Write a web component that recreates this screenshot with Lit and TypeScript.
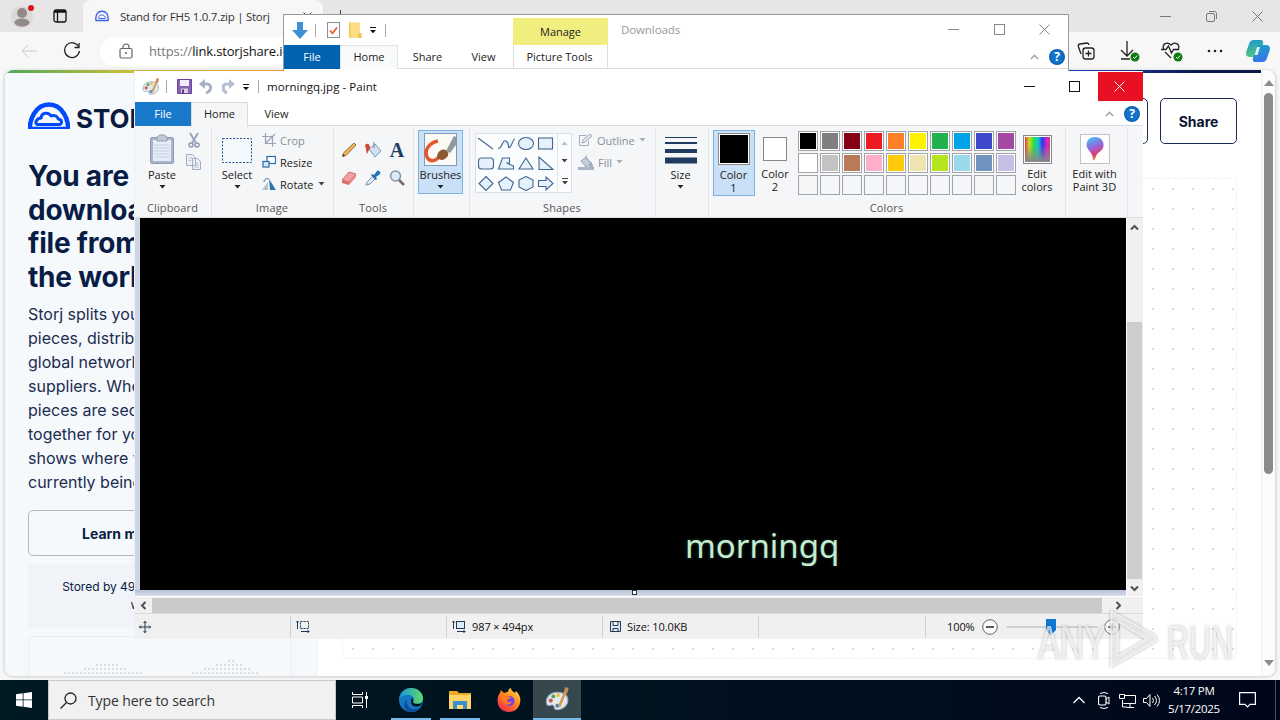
import { LitElement, html, css, svg, nothing } from 'lit';
import type { SVGTemplateResult } from 'lit';
import { customElement } from 'lit/decorators.js';
import { classMap } from 'lit/directives/class-map.js';
import { styleMap } from 'lit/directives/style-map.js';

const icon = (w: number, h: number, body: SVGTemplateResult) =>
    html`<svg width=${w} height=${h} viewBox="0 0 ${w} ${h}" fill="none">${body}</svg>`;

const shared = css`
    :host {
        box-sizing: border-box;
        display: block;
        font-family: 'Open Sans', 'Noto Sans', sans-serif;
        font-size: 11px;
        color: #222;
        white-space: nowrap;
    }
    *,
    *::before {
        box-sizing: border-box;
    }
    svg {
        display: block;
        flex: none;
    }
    .row {
        display: flex;
        align-items: center;
    }
    .grow {
        flex: 1;
    }
    .cell {
        display: flex;
        align-items: center;
        justify-content: center;
        flex: none;
    }
`;

// window controls and small glyphs used by more than one window
const minimizeIcon = (c: string) => icon(11, 11, svg`<path d="M0 5.5h11" stroke=${c} />`);
const maximizeIcon = (c: string) => icon(11, 11, svg`<rect x=".5" y=".5" width="10" height="10" stroke=${c} />`);
const closeIcon = (c: string) => icon(11, 11, svg`<path d="M.5.5l10 10M10.5.5l-10 10" stroke=${c} />`);
const caret = (c = '#222') => icon(7, 4, svg`<path d="M.5 0h6l-3 3.6z" fill=${c} />`);
const qatCaret = icon(8, 8, svg`<path d="M1 1.5h6" stroke="#111" /><path d="M1 4h6L4 7.2z" fill="#111" />`);
const collapseIcon = icon(9, 6, svg`<path d="M.8 5l3.7-3.6L8.2 5" stroke="#a5a5a5" stroke-width="1.5" />`);
const helpIcon = html`<svg width="16" height="16" viewBox="0 0 16 16">
    <circle cx="8" cy="8" r="8" fill="#0b62b5" />
    <circle cx="8" cy="8" r="6.6" fill="#1273cb" />
    <text x="8" y="12.2" text-anchor="middle" font-size="12" font-weight="700" fill="#fff">?</text>
</svg>`;

const paletteIcon = (size: number) => html`<svg width=${size} height=${size} viewBox="0 0 24 24" fill="none">
    <path
        d="M11 5C4.500 5.500.8 10 1.300 15c.4 3 2.400 3.200 4 2.500 2-.8 3.300 0 3.400 1.700.2 2.300 1.600 3 4.300 2.600 5.600-.9 9.300-4.800 9-9.800C21.700 7.400 17.500 4.500 11 5z"
        fill="#dfe9ef"
        stroke="#8fa5b5"
    />
    <circle cx="5.500" cy="13" r="2" fill="#d4504a" />
    <circle cx="8" cy="9" r="1.900" fill="#57a54e" />
    <circle cx="12.500" cy="7.800" r="1.800" fill="#efc13c" />
    <circle cx="12" cy="18" r="2" fill="#3e7fc1" />
    <path d="M20.500 2.500L13.500 19" stroke="#d99b54" stroke-width="2.600" />
    <path d="M22.800.6l-3.600-.4-1 5.300 3 1.200z" fill="#c38b5c" />
</svg>`;

@customElement('browser-window')
export class BrowserWindow extends LitElement {
    static override styles = [
        shared,
        css`
            :host {
                height: 680px;
                background: #f7f7f7;
            }
            .strip {
                height: 32px;
                background: #e6e6e6;
            }
            .profile {
                width: 44px;
            }
            .tabs {
                width: 32px;
            }
            .tab {
                width: 240px;
                height: 32px;
                margin-left: 7px;
                padding: 0 11px 0 12px;
                border-radius: 8px 8px 0 0;
                background: #f7f7f7;
            }
            .tab .title {
                margin-left: 11px;
                font-size: 11.5px;
                letter-spacing: -0.26px;
                color: #333;
            }
            .plus {
                width: 34px;
            }
            .control {
                width: 46px;
            }
            .toolbar {
                height: 38px;
                position: relative;
            }
            .back {
                width: 57px;
            }
            .reload {
                width: 30px;
            }
            .address {
                width: 900px;
                height: 29px;
                margin-left: 13px;
                padding-left: 19px;
                border-radius: 15px;
                background: #fff;
                font-size: 13px;
                letter-spacing: -0.15px;
                color: #111;
            }
            .address .url {
                margin-left: 16px;
            }
            .address .scheme {
                color: #777;
            }
            .tools {
                padding-right: 1px;
            }
            .tool {
                width: 43px;
            }
            .page {
                height: 607px;
                width: 1272px;
                margin: 0 0 0 4px;
                border-radius: 9px;
                border: 1px solid #dcdcdc;
                border-top: 0;
                background: #fff;
                overflow: hidden;
                display: flex;
                box-shadow: 0 0 3px #ccc;
                font-family: Inter, sans-serif;
                color: #091c45;
            }
            .main {
                flex: 1;
                display: flex;
                flex-direction: column;
            }
            .bar {
                flex: none;
                height: 3px;
                background: linear-gradient(90deg, #4fa85a 0, #c9bf3a 10%, #f0a13a 20%, #e0522f 45%, #2452e0 78%, #1d3fb0 86%, #0a1b4a 95%);
            }
            .columns {
                flex: 1;
                min-height: 0;
                display: flex;
            }
            .side {
                width: 313px;
                padding: 29px 25px 0 23px;
                background: #f5f9fc;
                border-right: 1px solid #f0f3f6;
            }
            .logo {
                height: 27px;
                overflow: hidden;
                display: flex;
                gap: 6px;
                align-items: flex-start;
                color: #0b1b3f;
                font-size: 26px;
                font-weight: 700;
                line-height: 34px;
            }
            h1 {
                margin: 31px 0 0;
                font-size: 28px;
                line-height: 33.6px;
                font-weight: 700;
                letter-spacing: -0.2px;
            }
            p {
                margin: 8px 0 0;
                font-size: 16px;
                line-height: 24px;
                color: #1b2c50;
            }
            .button {
                display: flex;
                align-items: center;
                justify-content: center;
                height: 46px;
                border: 1px solid #b3b8c4;
                border-radius: 5px;
                font-size: 14px;
                font-weight: 700;
            }
            .side .button {
                margin-top: 16px;
            }
            .stored {
                height: 64px;
                margin-top: 8px;
                padding-top: 14px;
                background: #f0f3f7;
                text-align: center;
                font-size: 12px;
                line-height: 18px;
            }
            .map {
                height: 60px;
                margin-top: 8px;
                border: 1px solid #e9eef3;
                border-radius: 4px;
                display: flex;
                justify-content: center;
                padding-top: 22px;
            }
            .content {
                flex: 1;
                padding: 25px 24px 0 24px;
                display: flex;
                flex-direction: column;
            }
            .actions {
                display: flex;
                justify-content: flex-end;
                gap: 12px;
            }
            .actions .button {
                width: 77px;
                border-color: #1a2a50;
                color: #0a1330;
            }
            .dots {
                height: 481px;
                margin-top: 34px;
                border: 1px dashed #eee;
                border-radius: 6px;
                background: radial-gradient(circle at 10px 10px, #ddd 0.9px, transparent 1.3px) 0 0 / 20px 20px;
            }
            .scroll {
                width: 14px;
                display: flex;
                flex-direction: column;
                align-items: center;
                justify-content: space-between;
                padding: 10px 0 10px;
                border-left: 1px solid #f3f3f3;
                background: #fcfcfc;
            }
            .thumb {
                width: 9px;
                height: 381px;
                border-radius: 5px;
                background: #8b8b8b;
                margin-bottom: auto;
                margin-top: 7px;
            }
        `,
    ];

    private _cloud(size: number, color: string) {
        return html`<svg width=${size} height=${size} viewBox="0 0 42 42" fill="none" stroke=${color} stroke-width="4.500">
            <path d="M2.500 36C-1 16 9 2.500 21 2.500S43 16 39.500 36" />
            <path
                d="M9 22.500h22c3.500 0 3.500-5-.8-5.500-.7-3-4-4.500-7-3-3-4.500-10-3.500-10 2-5 .3-6.500 5-4.200 6.500z"
                stroke-width="3"
                stroke-linejoin="round"
            />
            <path d="M2 26h38" stroke-width="2.500" />
        </svg>`;
    }

    private _favicon() {
        return icon(
            14,
            14,
            svg`<path d="M1 11.500C0 5 3.500 2.200 7 2.200S14 5 13 11.500z" stroke="#3b62e8" stroke-width="1.400" />
                <path d="M4 9.500h6c1.200-.5.8-2-.5-2C9 6 7.500 5.500 6.500 6.300 5 5.500 4 6.500 4.200 7.600c-1 .3-1 1.600-.2 1.900z" stroke="#3b62e8" />`,
        );
    }

    private _check() {
        return svg`<circle cx="17" cy="17" r="4.500" fill="#107c10" /><path d="M15 17l1.500 1.500 2.700-3" stroke="#fff" />`;
    }

    private _mapDots() {
        const rows = [
            [14, 11, 15],
            [11, 16, 21],
            [8, 18, 24],
            [3, 22, 27],
            [0, 27, 48],
        ];
        return html`<svg width="226" height="20" viewBox="0 0 226 20">
            ${rows.map(([from, to], y) =>
                Array.from({ length: 56 }, (_, i) => i)
                    .filter((i) => (y === 4 ? i < 24 || i > 29 : (i > from && i < to + 2) || (i > 44 - y * 3 && i < 47 + y * 2)))
                    .map((i) => svg`<circle cx=${i * 4 + 2} cy=${y * 4 + 2} r="1" fill="#ced3d9" />`),
            )}
        </svg>`;
    }

    override render() {
        return html`
            <div class="strip row">
                <div class="profile cell">
                    ${icon(24, 26, svg`<circle cx="12" cy="14" r="11" fill="#dcd8d5" /><circle cx="12" cy="10" r="5" fill="#918a86" /><ellipse cx="12" cy="19.500" rx="7.500" ry="4" fill="#918a86" /><circle cx="21" cy="5" r="3" fill="#d9161c" />`)}
                </div>
                <div class="tabs cell">
                    ${icon(14, 14, svg`<rect x="1" y="1" width="12" height="12" rx="2" stroke="#111" stroke-width="1.300" /><path d="M1 2.500h12" stroke="#111" stroke-width="2.500" /><path d="M4.500 3v10" stroke="#111" stroke-width="1.300" />`)}
                </div>
                <div class="tab row">
                    ${this._favicon()}
                    <span class="title">Stand for FH5 1.0.7.zip | Storj</span>
                    <span class="grow"></span>
                    ${icon(9, 9, svg`<path d="M.5.5l8 8M8.500.5l-8 8" stroke="#444" />`)}
                </div>
                <div class="plus cell">${icon(13, 13, svg`<path d="M6.500 0v13M0 6.500h13" stroke="#444" />`)}</div>
                <span class="grow"></span>
                <div class="control cell">${minimizeIcon('#777')}</div>
                <div class="control cell">
                    ${icon(11, 11, svg`<rect x=".5" y="2.500" width="8" height="8" rx="1.500" stroke="#777" /><path d="M3 .5h5.500a2 2 0 012 2V8" stroke="#777" />`)}
                </div>
                <div class="control cell">${closeIcon('#777')}</div>
            </div>
            <div class="toolbar row">
                <div class="back cell">${icon(16, 14, svg`<path d="M16 7H1M7 1L1 7l6 6" stroke="#c9c9c9" />`)}</div>
                <div class="reload cell">
                    ${icon(18, 18, svg`<path d="M15.500 4.500A7.400 7.400 0 1016.400 9" stroke="#222" stroke-width="1.300" /><path d="M16 1v4.500h-4.500" stroke="#222" stroke-width="1.300" />`)}
                </div>
                <div class="address row">
                    ${icon(14, 16, svg`<rect x="1" y="5.500" width="12" height="9.500" rx="1.500" stroke="#666" stroke-width="1.200" /><path d="M4 5.500V4a3 3 0 016 0v1.500" stroke="#666" stroke-width="1.200" /><circle cx="7" cy="10" r="1" fill="#666" />`)}
                    <span class="url"><span class="scheme">https://</span>link.storjshare.io</span>
                </div>
                <span class="grow"></span>
                <div class="tools row">
                    <div class="tool cell">
                        ${icon(18, 18, svg`<rect x="6" y="6" width="11" height="11" rx="2.500" stroke="#222" stroke-width="1.300" /><path d="M11.500 8.500v6M8.500 11.500h6M4 12L1.300 4.300Q1 2.500 3 2l7-1q1.800 0 2 2" stroke="#222" stroke-width="1.300" />`)}
                    </div>
                    <div class="tool cell">
                        ${icon(22, 22, svg`<path d="M9 1v14M3 10l6 6 6-6M3 19h9" stroke="#222" stroke-width="1.300" />${this._check()}`)}
                    </div>
                    <div class="tool cell">
                        ${icon(22, 22, svg`<path d="M2.500 9C1 4 6 1 10 5c4-4 9-1 7.500 4M0 9.500h5L7.500 6l3 7 2-3.500H18M4 12l6 6" stroke="#222" stroke-width="1.300" />${this._check()}`)}
                    </div>
                    <div class="tool cell">
                        ${icon(16, 4, svg`<circle cx="2" cy="2" r="1.300" fill="#222" /><circle cx="8" cy="2" r="1.300" fill="#222" /><circle cx="14" cy="2" r="1.300" fill="#222" />`)}
                    </div>
                    <div class="tool cell">
                        ${icon(
                            24,
                            22,
                            svg`<defs><linearGradient id="cp1" x2=".3" y2="1"><stop stop-color="#1593dd" /><stop offset="1" stop-color="#53c878" /></linearGradient>
                                <linearGradient id="cp2" x2=".4" y2="1"><stop stop-color="#19a5c4" /><stop offset="1" stop-color="#3a75ea" /></linearGradient></defs>
                                <path d="M8 0h7c2 0 2.500 2 2 4l-3 9c-1 3-2 4-4 4H4c-4 0-4.500-3-3.500-6L3 4c1-3 2-4 5-4z" fill="url(#cp1)" />
                                <path d="M16 22H9c-2 0-2.500-2-2-4l3-9c1-3 2-4 4-4h6c4 0 4.500 3 3.500 6L21 18c-1 3-2 4-5 4z" fill="url(#cp2)" />
                                <path d="M11 7h3l-2.500 8H8.500z" fill="#dff5fa" />`,
                        )}
                    </div>
                </div>
            </div>
            <div class="page">
                <div class="main">
                    <div class="bar"></div>
                    <div class="columns">
                        <div class="side">
                            <div class="logo">${this._cloud(42, '#0149ff')}<span>STORJ</span></div>
                            <h1>You are<br />downloading a<br />file from around<br />the world</h1>
                            <p>
                                Storj splits your files into<br />pieces, distributed over a<br />global network of<br />suppliers. When needed,<br />pieces
                                are securely put<br />together for you. The map<br />shows where your file is<br />currently being stored.
                            </p>
                            <div class="button">Learn more about Storj</div>
                            <div class="stored">Stored by 49 providers all over the<br />worldwide</div>
                            <div class="map">${this._mapDots()}</div>
                        </div>
                        <div class="content">
                            <div class="actions">
                                <div class="button"></div>
                                <div class="button">Share</div>
                            </div>
                            <div class="dots"></div>
                        </div>
                    </div>
                </div>
                <div class="scroll">
                    ${icon(10, 6, svg`<path d="M0 6h10L5 0z" fill="#8b8b8b" />`)}
                    <div class="thumb"></div>
                    ${icon(10, 6, svg`<path d="M0 0h10L5 6z" fill="#8b8b8b" />`)}
                </div>
            </div>
        `;
    }
}

@customElement('explorer-window')
export class ExplorerWindow extends LitElement {
    static override styles = [
        shared,
        css`
            :host {
                border: 1px solid #9a9a9a;
                background: #fff;
                overflow: hidden;
            }
            .title {
                height: 30px;
            }
            .quick {
                width: 229px;
                padding-left: 8px;
            }
            .sep {
                width: 1px;
                height: 13px;
                background: #aaa;
            }
            .manage {
                width: 95px;
                height: 27px;
                margin-top: 3px;
                background: #f1ee80;
            }
            .name {
                margin-left: 13px;
                margin-top: -2px;
                color: #999;
                font-size: 11.5px;
                letter-spacing: -0.1px;
            }
            .control {
                width: 45.5px;
                padding: 0 1px 2px 0;
            }
            .tabs {
                height: 24px;
                border-bottom: 1px solid #dadbdc;
            }
            .tab {
                width: 56px;
                height: 24px;
            }
            .file {
                background: #0063b1;
                color: #fff;
            }
            .home {
                width: 58px;
                padding-bottom: 1px;
                background: #f9fafb;
                border: 1px solid #e2e3e4;
                border-bottom: 0;
            }
            .picture {
                width: 95px;
                margin-left: 1px;
                padding-right: 2px;
                border: 1px solid #ddd;
                border-width: 0 1px;
            }
            .help {
                padding-right: 3px;
                gap: 10px;
            }
        `,
    ];

    override render() {
        return html`
            <div class="title row">
                <div class="quick row">
                    ${icon(16, 17, svg`<path d="M5 0h6v8h5l-8 9-8-9h5z" fill="#3d8fd6" />`)}
                    <span class="sep" style="margin-left:7px"></span>
                    <span style="margin-left:11px"
                        >${icon(13, 16, svg`<rect x=".5" y=".5" width="12" height="15" fill="#fcfcfc" stroke="#8a8f99" /><path d="M3 8.500l2.500 2.800L10 5.500" stroke="#e0653b" stroke-width="1.800" />`)}</span
                    >
                    <span style="margin-left:8px"
                        >${icon(14, 16, svg`<path d="M1 .5h11v11l1.500 1V16H1z" fill="#ffdd83" /><path d="M1 .5h1.500V16H1zM10 11h3.500v5H10z" fill="#f3c655" />`)}</span
                    >
                    <span style="margin-left:7px">${qatCaret}</span>
                    <span class="sep" style="margin-left:8px"></span>
                </div>
                <div class="manage cell">Manage</div>
                <span class="name">Downloads</span>
                <span class="grow"></span>
                <div class="control cell">${minimizeIcon('#888')}</div>
                <div class="control cell">${maximizeIcon('#888')}</div>
                <div class="control cell">${closeIcon('#888')}</div>
            </div>
            <div class="tabs row">
                <div class="tab file cell">File</div>
                <div class="tab home cell">Home</div>
                <div class="tab cell" style="width:59px">Share</div>
                <div class="tab cell" style="width:55px;padding-right:2px">View</div>
                <div class="tab picture cell">Picture Tools</div>
                <span class="grow"></span>
                <div class="help row">${collapseIcon}${helpIcon}</div>
            </div>
        `;
    }
}

const PALETTE = [
    ['#000', '#7f7f7f', '#880015', '#ed1c24', '#ff7f27', '#fff200', '#22b14c', '#00a2e8', '#3f48cc', '#a349a4'],
    ['#fff', '#c3c3c3', '#b97a57', '#ffaec9', '#ffc90e', '#efe4b0', '#b5e61d', '#99d9ea', '#7092be', '#c8bfe7'],
    ['', '', '', '', '', '', '', '', '', ''],
];

const SHAPES = [
    svg`<path d="M1 2l15 11" />`,
    svg`<path d="M1 12C5 14 5 3 9 5s1 9 4 6 2-7 5-8" />`,
    svg`<ellipse cx="9" cy="7.500" rx="7.500" ry="6" />`,
    svg`<rect x="1.500" y="2" width="14" height="11" />`,
    svg`<rect x="1.500" y="2" width="15" height="11" rx="3" />`,
    svg`<path d="M1.500 13l4-11h7v5h-3l7 3v3z" />`,
    svg`<path d="M9 2l7 11H2z" />`,
    svg`<path d="M2 1v12.500h14z" />`,
    svg`<path d="M9 .5l7 7-7 7-7-7z" />`,
    svg`<path d="M9 1l7.500 5.500-3 7.500h-9l-3-7.500z" />`,
    svg`<path d="M9 .5l7 3.500v7l-7 3.500-7-3.500V4z" />`,
    svg`<path d="M1.500 4.500H9V1l7 6.500L9 14v-3.500H1.500z" />`,
];

@customElement('paint-window')
export class PaintWindow extends LitElement {
    static override styles = [
        shared,
        css`
            :host {
                background: #f0f0f0;
                overflow: hidden;
                border-left: 1px solid #eef1f5;
            }
            .title {
                height: 31px;
                background: #fff;
            }
            .quick {
                padding-left: 7px;
                width: 132px;
            }
            .sep {
                width: 1px;
                height: 13px;
                background: #aaa;
            }
            .name {
                font-size: 11.5px;
                color: #111;
                letter-spacing: 0.06px;
            }
            .control {
                width: 45px;
                height: 29px;
                padding: 0 2px 1px 0;
            }
            .close {
                background: #e81123;
            }
            .tabs {
                height: 24px;
                background: #fff;
                border-bottom: 1px solid #dadbdc;
            }
            .tab {
                width: 57px;
                height: 24px;
            }
            .file {
                width: 56px;
                background: #1979ca;
                color: #fff;
            }
            .home {
                height: 25px;
                margin-bottom: -1px;
                padding-bottom: 2px;
                background: #f5f6f7;
                border: 1px solid #dadbdc;
                border-bottom: 0;
            }
            .help {
                padding-right: 3px;
                gap: 10px;
            }
            .ribbon {
                display: flex;
                height: 92px;
                padding: 2px 0 0;
                background: #f5f6f7;
                border-bottom: 1px solid #dcddde;
            }
            .group {
                flex: none;
                display: flex;
                flex-direction: column;
                border-right: 1px solid #e2e4e7;
                height: 89px;
            }
            .body {
                flex: 1;
                display: flex;
            }
            .caption {
                height: 17px;
                padding-right: 1px;
                text-align: center;
                line-height: 15px;
                color: #555;
                letter-spacing: 0.15px;
            }
            .tall {
                display: flex;
                flex-direction: column;
                align-items: center;
                flex: none;
                line-height: 13px;
                text-align: center;
                height: 66px;
                padding-top: 4px;
                border: 1px solid transparent;
            }
            .tall.on {
                background: #c9e0f7;
                border-color: #7fb2e0;
            }
            .tall .pic {
                height: 35px;
                display: flex;
                align-items: center;
                justify-content: center;
                padding-bottom: 2px;
            }
            .tall .drop {
                margin-top: 4px;
            }
            .stack {
                display: flex;
                flex-direction: column;
                padding-top: 1px;
            }
            .item {
                display: flex;
                align-items: center;
                height: 22px;
                gap: 4px;
            }
            .off {
                color: #8a8f98;
            }
            .tools {
                display: grid;
                grid-template-columns: repeat(3, 24px);
                grid-auto-rows: 28px;
                padding: 8px 0 0 3px;
            }
            .gallery {
                display: flex;
                width: 97px;
                height: 60px;
                margin: 5px 0 0 5px;
                border: 1px solid #dcdfe3;
                background: #fafcfd;
            }
            .shapes {
                display: grid;
                grid-template-columns: repeat(4, 20px);
                grid-auto-rows: 20px;
                width: 81px;
                margin-top: -1px;
                place-items: center;
                stroke: #42678f;
                stroke-width: 1.1;
            }
            .shapes svg {
                fill: #e6f2fb;
            }
            .more {
                width: 14px;
                border-left: 1px solid #e1e4e8;
                display: flex;
                flex-direction: column;
                justify-content: space-around;
                align-items: center;
            }
            .swatches {
                display: grid;
                grid-template-columns: repeat(10, 20px);
                grid-auto-rows: 20px;
                gap: 2px;
                margin: 3px 0 0 1px;
            }
            .swatch {
                border: 1px solid #a0a3a7;
                padding: 1px;
                background: #f5f6f7;
            }
            .swatch.filled {
                background: #fff;
            }
            .swatch div {
                height: 100%;
            }
            .work {
                display: flex;
                height: 378px;
            }
            .canvas-area {
                width: 991px;
                background: linear-gradient(#cdd6e4 0 98%, #bac4d8 98.6%, #d5dcea);
                padding: 0 0 6px 5px;
                position: relative;
            }
            .canvas {
                height: 372px;
                background: #000;
                display: flex;
                align-items: flex-end;
                padding: 0 0 21px 545px;
                color: #c3ecd2;
                font-family: 'Noto Sans', sans-serif;
                font-size: 33px;
                line-height: 46px;
                text-shadow: 0 0 3px #26472f;
            }
            .handle {
                position: absolute;
                left: 497px;
                bottom: 1px;
                width: 5px;
                height: 5px;
                border: 1px solid #333;
                background: #fff;
            }
            .vscroll {
                width: 17px;
                margin-left: auto;
                display: flex;
                flex-direction: column;
                align-items: center;
                padding: 5px 1px 3px 0;
                border-left: 1px solid #fff;
            }
            .vthumb {
                width: 15px;
                height: 257px;
                margin: auto 0 5px;
                background: #cdcdcd;
            }
            .hscroll {
                height: 17px;
                padding-left: 4px;
                border-top: 1px solid #fff;
            }
            .hthumb {
                width: 950px;
                height: 15px;
                margin: 0 12px 0 4px;
                background: #cacaca;
            }
            .status {
                height: 26px;
                border-top: 1px solid #dadada;
                color: #111;
                letter-spacing: -0.1px;
            }
            .field {
                width: 156px;
                height: 22px;
                padding-left: 6px;
                gap: 6px;
                border-right: 1px solid #d3d3d3;
            }
            .track {
                width: 91px;
                height: 17px;
                display: flex;
                align-items: center;
                background: linear-gradient(#cfcfcf, #cfcfcf) center / 100% 2px no-repeat;
            }
        `,
    ];

    private _arrow(d: string) {
        return icon(9, 9, svg`<path d=${d} stroke="#505050" stroke-width="2" />`);
    }

    private _tool(body: SVGTemplateResult) {
        return html`<div class="cell">${icon(18, 18, body)}</div>`;
    }

    private _clipboard() {
        return html`<div class="group" style="width:77px">
            <div class="body">
                <div class="tall" style="width:46px;margin-left:4px">
                    <div class="pic">
                        ${icon(26, 32, svg`<rect x="1.500" y="3.500" width="23" height="26" rx="1.500" fill="#a9b3cb" stroke="#909cb8" /><rect x="4" y="6" width="18" height="21" fill="#e7edf6" /><path d="M5 11h16M5 14h16M5 17h16M5 20h16M5 23h16" stroke="#c4cfe0" /><path d="M8 3l3-2h4l3 2v4H8z" fill="#c2c9d8" stroke="#8f9ab3" />`)}
                    </div>
                    Paste
                    <span class="drop">${caret()}</span>
                </div>
                <div class="stack">
                    <div class="item">
                        ${icon(18, 18, svg`<path d="M5 2l6 10M13 2L7 12" stroke="#9aa5bd" stroke-width="2" /><circle cx="6" cy="14" r="2" stroke="#8f9bb6" stroke-width="1.500" /><circle cx="12" cy="14" r="2" stroke="#8f9bb6" stroke-width="1.500" />`)}
                    </div>
                    <div class="item">
                        ${icon(18, 18, svg`<path d="M1.500 1.500h6l3 3v8h-9zM7.500 5.500h5l3 3v8h-8z" fill="#edf1f7" stroke="#a3aec4" /><path d="M3.500 5h4M3.500 7.500h3M9.500 10h4M9.500 12h4M9.500 14h4" stroke="#b6c0d2" />`)}
                    </div>
                </div>
            </div>
            <div class="caption">Clipboard</div>
        </div>`;
    }

    private _image() {
        return html`<div class="group" style="width:122px">
            <div class="body">
                <div class="tall" style="width:50px">
                    <div class="pic">
                        ${icon(30, 26, svg`<rect x=".5" y="1.500" width="29" height="24" fill="#f3f8fd" stroke="#1f568f" stroke-dasharray="2 1.500" />`)}
                    </div>
                    Select
                    <span class="drop">${caret()}</span>
                </div>
                <div class="stack">
                    <div class="item off">
                        ${icon(14, 14, svg`<path d="M3.500 0v10.500H14M0 3.500h10.500V14M3.500 10.500L13 1" stroke="#98a2b3" stroke-width="1.200" />`)} Crop
                    </div>
                    <div class="item">
                        ${icon(14, 14, svg`<rect x="5" y="1.500" width="8.500" height="7" fill="#fff" stroke="#2b6ba5" stroke-width="1.200" /><rect x="1" y="6.500" width="6" height="5.500" fill="#d8eaf8" stroke="#2b6ba5" stroke-width="1.200" />`)} Resize
                    </div>
                    <div class="item">
                        ${icon(14, 14, svg`<path d="M6 5v8H0z" fill="#b9c0ca" /><path d="M7 2l7 11H8z" fill="#3174a8" /><path d="M2 5c0-3 3-4 5-3" stroke="#2e6ea6" />`)} Rotate ${caret('#444')}
                    </div>
                </div>
            </div>
            <div class="caption">Image</div>
        </div>`;
    }

    private _tools() {
        return html`<div class="group" style="width:80px">
            <div class="body">
                <div class="tools">
                    ${this._tool(svg`<path d="M2.500 15.500l1-3.500L14 2l2 2L6 14.500z" fill="#f0b357" stroke="#9a6a35" /><path d="M2.500 15.500l.8-2.500 1.700 1.600z" fill="#333" />`)}
                    ${this._tool(svg`<path d="M5 8l6-5 6 7-6 6z" fill="#cfe0ee" stroke="#7d99b3" /><path d="M1 4c3-3 5 0 5 3l-3 6z" fill="#cf4b32" /><path d="M10 7V1" stroke="#6d8297" />`)}
                    <div class="cell">
                        <svg width="18" height="18" viewBox="0 0 18 18">
                            <text x="9" y="15.500" text-anchor="middle" font-family="Liberation Serif" font-size="20" font-weight="700" fill="#1f3d63">A</text>
                        </svg>
                    </div>
                    ${this._tool(svg`<path d="M2 11L9 3l7 2-7 8z" fill="#f0a0a0" stroke="#cc7070" /><path d="M2 11l7 2v3l-7-2z" fill="#dc6d6d" /><path d="M9 13l7-8v3l-7 8z" fill="#e58585" />`)}
                    ${this._tool(svg`<path d="M2 16l1.500-3.500 6-6 2.500 2.500-6 6z" fill="#dde9f3" stroke="#7b94ab" /><path d="M8 5l2 1 3-4c2-1 4 1 3 3l-4 3 1 2-1.500 1L7 6z" fill="#2271b5" />`)}
                    ${this._tool(svg`<circle cx="7.500" cy="7" r="5" fill="#dcebf5" stroke="#8a96a3" stroke-width="1.500" /><path d="M11 11l5 5" stroke="#7a6a60" stroke-width="2.500" />`)}
                </div>
            </div>
            <div class="caption">Tools</div>
        </div>`;
    }

    private _brushes() {
        return html`<div class="group" style="width:56px">
            <div class="tall on" style="width:45px;height:64px;margin:2px 0 0 4px;padding-top:1px">
                <div class="pic" style="height:36px">
                    ${icon(33, 33, svg`<rect x=".5" y=".5" width="32" height="32" fill="#fcfaf5" stroke="#7d9cba" /><path d="M14 8C5 10 0 17 3 24c3 6 9 4 13-1" stroke="#e4572e" stroke-width="3.500" /><path d="M13 25c0-6 4-10 9-8 3 2 3 6 0 8-3 3-6 2-9 0z" fill="#8b5a2f" /><path d="M22 18L30 3l2 1v8l-6 8z" fill="#91999f" />`)}
                </div>
                Brushes
                <span class="drop">${caret()}</span>
            </div>
        </div>`;
    }

    private _shapes() {
        return html`<div class="group" style="width:186px">
            <div class="body">
                <div class="gallery">
                    <div class="shapes">${SHAPES.map((shape) => icon(18, 15, shape))}</div>
                    <div class="more">
                        ${icon(7, 4, svg`<path d="M.5 4h6l-3-3.600z" fill="#b9bec5" />`)} ${caret('#444')}
                        ${icon(8, 7, svg`<path d="M1 .5h6" stroke="#444" /><path d="M1 3h6L4 6.500z" fill="#444" />`)}
                    </div>
                </div>
                <div class="stack off" style="margin-left:6px">
                    <div class="item">
                        ${icon(15, 14, svg`<path d="M1.500 2.500h7M1.500 2v10.500h9V8" stroke="#a2adbf" /><path d="M4 10l1-3 7-6 2 2-7 6z" fill="#e8edf3" stroke="#98a3b8" />`)} Outline
                        ${caret('#a5aab2')}
                    </div>
                    <div class="item">
                        ${icon(16, 15, svg`<path d="M3 6l5-4 5 6-5 4z" fill="#c3cddc" stroke="#98a4b8" /><path d="M0 12h16v3H0z" fill="#a9b6ca" /><path d="M13 7l2 5h-4zM8 5V0" fill="#9fadc4" stroke="#9fadc4" />`)} Fill
                        ${caret('#a5aab2')}
                    </div>
                </div>
            </div>
            <div class="caption">Shapes</div>
        </div>`;
    }

    private _size() {
        return html`<div class="group" style="width:53px">
            <div class="tall" style="padding-right:3px">
                <div class="pic">
                    ${icon(32, 28, svg`<path d="M0 1.500h32" stroke="#1e3b60" /><path d="M0 7h32" stroke="#1e3b60" stroke-width="2" /><path d="M0 15h32" stroke="#1e3b60" stroke-width="4" /><path d="M0 24.500h32" stroke="#1e3b60" stroke-width="6" />`)}
                </div>
                Size
                <span class="drop">${caret()}</span>
            </div>
        </div>`;
    }

    private _colors() {
        return html`<div class="group" style="width:357px">
            <div class="body">
                <div class="tall on" style="width:42px;margin:2px 0 0 4px;padding:1px 1px 0 0">
                    <div class="pic" style="height:36px">
                        ${icon(32, 32, svg`<rect x=".5" y=".5" width="31" height="31" fill="#fff" stroke="#888" /><rect x="2" y="2" width="28" height="28" fill="#000" />`)}
                    </div>
                    Color<br />1
                </div>
                <div class="tall" style="width:42px;padding-right:2px">
                    <div class="pic">${icon(24, 24, svg`<rect x=".5" y=".5" width="23" height="23" fill="#fff" stroke="#888" />`)}</div>
                    Color<br />2
                </div>
                <div class="swatches">
                    ${PALETTE.flat().map(
                        (c) => html`<div class=${classMap({ swatch: true, filled: !!c })}>
                            ${c ? html`<div style=${styleMap({ background: c })}></div>` : nothing}
                        </div>`,
                    )}
                </div>
                <div class="tall" style="width:42px">
                    <div class="pic">
                        ${icon(
                            29,
                            29,
                            svg`<defs><linearGradient id="hue"><stop stop-color="#e33" /><stop offset=".17" stop-color="#cd2" /><stop offset=".36" stop-color="#2d4" /><stop offset=".52" stop-color="#1cc" /><stop offset=".7" stop-color="#33e" /><stop offset=".88" stop-color="#d2c" /><stop offset="1" stop-color="#d35" /></linearGradient>
                                <linearGradient id="fade" x2="0" y2="1"><stop offset=".3" stop-color="#888" stop-opacity="0" /><stop offset="1" stop-color="#888" /></linearGradient></defs>
                                <rect x=".5" y=".5" width="28" height="28" fill="#fff" stroke="#888" /><rect x="2" y="2" width="25" height="25" fill="url(#hue)" /><rect x="2" y="2" width="25" height="25" fill="url(#fade)" />`,
                        )}
                    </div>
                    Edit<br />colors
                </div>
            </div>
            <div class="caption">Colors</div>
        </div>`;
    }

    private _paint3d() {
        return html`<div class="group" style="width:62px">
            <div class="tall" style="width:57px">
                <div class="pic">
                    ${icon(
                        30,
                        30,
                        svg`<defs><linearGradient id="drop" x1=".3" x2=".6" y2="1"><stop stop-color="#42bdf3" /><stop offset=".45" stop-color="#9b62dc" /><stop offset=".75" stop-color="#e23a6b" /><stop offset="1" stop-color="#fb9c22" /></linearGradient></defs>
                            <rect x=".5" y=".5" width="29" height="29" fill="#fdfdfd" stroke="#bfc2c6" /><path d="M15 3c6 0 9 4 8.500 9-.6 5-5.500 6-7 9-1 3-1.500 5-4 5.500 1-3 0-5-2-8C8.500 15.500 6.500 14 6.500 11 6.500 6 10 3 15 3z" fill="url(#drop)" />`,
                    )}
                </div>
                Edit with<br />Paint 3D
            </div>
        </div>`;
    }

    override render() {
        return html`
            <div class="title row">
                <div class="quick row">
                    ${paletteIcon(18)}
                    <span class="sep" style="margin-left:6px"></span>
                    <span style="margin-left:10px"
                        >${icon(15, 15, svg`<path d="M.5.5h14v14h-14z" fill="#8a62b5" stroke="#69459a" /><path d="M3 1h9v6H3z" fill="#f1ecf7" /><path d="M4 9.500h7V14H4z" fill="#d9cfe8" /><path d="M5 10.500h2V14H5z" fill="#5a3b86" />`)}</span
                    >
                    <span style="margin-left:7px"
                        >${icon(14, 15, svg`<path d="M3 5h5c5 0 5 7-1 9" stroke="#a5b1c4" stroke-width="3" /><path d="M6 0v10L0 5z" fill="#a5b1c4" />`)}</span
                    >
                    <span style="margin-left:8px"
                        >${icon(14, 15, svg`<path d="M11 5H6C1 5 1 12 6 14" stroke="#b5bfce" stroke-width="3" /><path d="M8 0v10l6-5z" fill="#b5bfce" />`)}</span
                    >
                    <span style="margin-left:7px">${qatCaret}</span>
                    <span class="sep" style="margin-left:8px"></span>
                </div>
                <span class="name">morningq.jpg - Paint</span>
                <span class="grow"></span>
                <div class="control cell">${minimizeIcon('#111')}</div>
                <div class="control cell">${maximizeIcon('#111')}</div>
                <div class="control close cell">${closeIcon('#fff')}</div>
            </div>
            <div class="tabs row">
                <div class="tab file cell">File</div>
                <div class="tab home cell">Home</div>
                <div class="tab cell">View</div>
                <span class="grow"></span>
                <div class="help row">${collapseIcon}${helpIcon}</div>
            </div>
            <div class="ribbon">
                ${this._clipboard()} ${this._image()} ${this._tools()} ${this._brushes()} ${this._shapes()} ${this._size()}
                ${this._colors()} ${this._paint3d()}
            </div>
            <div class="work">
                <div class="canvas-area">
                    <div class="canvas">morningq</div>
                    <span class="handle"></span>
                </div>
                <div class="vscroll">
                    ${this._arrow('M1 6.500L4.500 3 8 6.500')}
                    <div class="vthumb"></div>
                    ${this._arrow('M1 2.500L4.500 6 8 2.500')}
                </div>
            </div>
            <div class="hscroll row">
                ${this._arrow('M6.500 1L3 4.500 6.500 8')}
                <div class="hthumb"></div>
                ${this._arrow('M2.500 1L6 4.500 2.500 8')}
            </div>
            <div class="status row">
                <div class="field row" style="padding-left:4px">
                    ${icon(12, 12, svg`<path d="M6 0v12M0 6h12M4.500 2L6 .5 7.500 2M4.500 10L6 11.500 7.500 10M2 4.500L.5 6 2 7.500M10 4.500L11.500 6 10 7.500" stroke="#1f3a57" />`)}
                </div>
                <div class="field row" style="padding-left:5px">
                    ${icon(14, 13, svg`<rect x="4.500" y="1.500" width="8" height="7" stroke="#1f3a57" stroke-dasharray="2 1" /><path d="M1.500 9V1M0 2.500L1.500 1 3 2.500M5 11.500h8M11.500 10l1.500 1.500-1.500 1.500" stroke="#1f3a57" />`)}
                </div>
                <div class="field row" style="padding-left:5px">
                    ${icon(14, 13, svg`<rect x="4.500" y="1.500" width="8" height="7" fill="#dcebf8" stroke="#1f3a57" /><path d="M1.500 9V1M0 2.500L1.500 1 3 2.500M5 11.500h8M11.500 10l1.500 1.500-1.500 1.500" stroke="#1f3a57" />`)}
                    987 × 494px
                </div>
                <div class="field row" style="padding-left:7px">
                    ${icon(11, 11, svg`<path d="M.5.5h10v10h-10zM3 .5v4h5v-4M3 10.500v-3h5v3" fill="#e1ebf4" stroke="#1f3a57" />`)} Size: 10.0KB
                </div>
                <div class="field row" style="width:167px"></div>
                <div class="row" style="padding-left:21px">
                    <span style="width:28px">100%</span>
                    <span style="margin:0 9px 0 7px"
                        >${icon(16, 16, svg`<circle cx="8" cy="8" r="7.300" fill="#fafafa" stroke="#666" /><path d="M4 8h8" stroke="#333" stroke-width="1.600" />`)}</span
                    >
                    <div class="track"><span style="width:39px"></span>${icon(10, 16, svg`<path d="M0 0h10v11l-5 5-5-5z" fill="#0f78d2" />`)}</div>
                    <span style="margin-left:6px"
                        >${icon(16, 16, svg`<circle cx="8" cy="8" r="7.300" fill="#fafafa" stroke="#777" /><path d="M4 8h8M8 4v8" stroke="#666" stroke-width="1.600" />`)}</span
                    >
                </div>
            </div>
        `;
    }
}

@customElement('task-bar')
export class TaskBar extends LitElement {
    static override styles = [
        shared,
        css`
            :host {
                display: flex;
                height: 40px;
                background: linear-gradient(90deg, #001a22, #00121f 45%, #000c1c 80%, #00061a);
                color: #fff;
            }
            .start {
                width: 48px;
            }
            .search {
                width: 288px;
                padding-left: 11px;
                gap: 11px;
                border: 1px solid #c8c8c8;
                background: #f1f1f1;
                color: #333;
                font-size: 14px;
                letter-spacing: -0.1px;
            }
            .app {
                width: 49px;
                padding-top: 1px;
                border-bottom: 2px solid transparent;
            }
            .view {
                width: 50px;
                padding-right: 2px;
            }
            .open {
                width: 40px;
                margin: 0 4px 0 5px;
                border-color: #76b9ed;
            }
            .active {
                width: 48px;
                background: #36474e;
                border-color: #76b9ed;
            }
            .tray {
                gap: 9px;
                padding-right: 9px;
            }
            .clock {
                width: 60px;
                text-align: center;
                font-size: 11.5px;
                line-height: 18px;
                letter-spacing: -0.3px;
            }
            .notice {
                width: 46px;
            }
            .peek {
                width: 5px;
                margin-left: 5px;
                border-left: 1px solid #44505e;
            }
        `,
    ];

    override render() {
        return html`
            <div class="start cell">
                ${icon(16, 16, svg`<path d="M0 2.300L6.700 1.300v6.200H0zM7.500 1.200L16 0v7.500H7.500zM0 8.300h6.700v6.400L0 13.700zM7.500 8.300H16V16l-8.500-1.200z" fill="#fff" />`)}
            </div>
            <div class="search row">
                ${icon(17, 17, svg`<circle cx="10.500" cy="6.500" r="5.500" stroke="#222" stroke-width="1.300" /><path d="M6.500 10.500L.5 16.500" stroke="#222" stroke-width="1.300" />`)}
                Type here to search
            </div>
            <div class="app view cell">
                ${icon(16, 16, svg`<path d="M.5 0v2.500h10V0M.5 16v-2.500h10V16M.5 5h10v6H.5zM14.500 0v16" stroke="#fff" /><path d="M13 4h3v3h-3z" fill="#fff" />`)}
            </div>
            <div class="app open cell">
                ${icon(
                    24,
                    24,
                    svg`<defs><linearGradient id="e1" x2="1"><stop stop-color="#1593d8" /><stop offset="1" stop-color="#61dc6a" /></linearGradient></defs>
                        <circle cx="12" cy="12" r="12" fill="#1478c4" /><path d="M0 11C1 4 6 0 12 0c7 0 12 5 12 10 0 4-3 6-6 6-3 .2-4.500-1-4-2 3-3-1-8-6-7-4 .5-7 2-8 4z" fill="url(#e1)" />
                        <path d="M8 12c-1 6 4 10 9 9l4-1c-3 4-8 5-12 3.500C4 21 4 14 8 12z" fill="#0d4f9e" /><path d="M14 14c1 2 4 2.500 9 1-1 3-4 4-7 3.500S11 15 12.500 10c1.500 1 2.500 2 1.500 4z" fill="#00161f" />`,
                )}
            </div>
            <div class="app open cell">
                ${icon(22, 20, svg`<path d="M0 1h8l2 2h12v16H0z" fill="#e9a825" /><path d="M0 5h22v14H0z" fill="#ffd667" /><path d="M4 11h14v8h-4v-4H8v4H4z" fill="#3c8fcf" />`)}
            </div>
            <div class="app cell">
                ${icon(
                    24,
                    24,
                    svg`<defs><linearGradient id="ff" x1=".9" x2=".2" y2="1"><stop stop-color="#ffe24a" /><stop offset=".45" stop-color="#ff8a1c" /><stop offset="1" stop-color="#f0244e" /></linearGradient></defs>
                        <path d="M3 5l1-3 3 3c2-1 3-1 4-1 0-2 1-3 3-4 0 3 3 4 4 5l1-2c4 4 5 8 4 12-1 5-5 9-11 9S1 20 .6 14C.4 10 1 7 3 5z" fill="url(#ff)" />
                        <circle cx="12.500" cy="13" r="5" fill="#7542e5" /><path d="M5 9c3-2 6 0 9 0-1 2-4 2-4 4 1 2 4 1 5 0-1 5-8 5-10-1z" fill="#ff7a1f" />`,
                )}
            </div>
            <div class="app active cell">${paletteIcon(25)}</div>
            <span class="grow"></span>
            <div class="tray row">
                ${icon(12, 8, svg`<path d="M.5 7L6 1.500 11.500 7" stroke="#fff" stroke-width="1.300" />`)}
                <span style="margin-left:4px"
                    >${icon(12, 17, svg`<rect x=".5" y="4" width="7.500" height="9" rx="1.500" stroke="#fff" stroke-width="1.200" /><path d="M8 7l3-2v7l-3-2M2 1.500q4-2 8 0M2 15.500q4 2 8 0" stroke="#fff" />`)}</span
                >
                ${icon(17, 15, svg`<path d="M4.500 2.500h12v8h-12M8 14.500h7M11 10.500v4M3.500 7v7H8" stroke="#fff" /><path d="M.5 1.500h5v4h-5z" fill="#001" stroke="#fff" />`)}
                <span style="margin:0 -5px 0 -2px"
                    >${icon(17, 15, svg`<path d="M.5 5.500h3l3.500-4v12l-3.500-4h-3zM9.500 5q2 2.500 0 5M11.500 3q4 4.500 0 9M14 1.500q5 6 0 12" stroke="#fff" />`)}</span
                >
            </div>
            <div class="clock cell"><span>4:17 PM<br />5/17/2025</span></div>
            <div class="notice cell">${icon(17, 16, svg`<path d="M.6.6h15.800v11.800H11L8.500 15 6 12.400H.6z" stroke="#fff" stroke-width="1.200" />`)}</div>
            <span class="peek"></span>
        `;
    }
}

@customElement('app-root')
export class AppRoot extends LitElement {
    static override styles = css`
        :host {
            display: block;
            position: relative;
            width: 1280px;
            height: 720px;
            overflow: hidden;
        }
        explorer-window {
            position: absolute;
            left: 283px;
            top: 14px;
            width: 786px;
            height: 60px;
        }
        paint-window {
            position: absolute;
            left: 134px;
            top: 71px;
            width: 1009px;
            height: 568px;
        }
        .watermark {
            position: absolute;
            left: 1034px;
            top: 608px;
            filter: drop-shadow(0 0 1.5px rgba(0, 0, 0, 0.4));
        }
    `;

    override render() {
        return html`
            <browser-window></browser-window>
            <explorer-window></explorer-window>
            <paint-window></paint-window>
            <task-bar></task-bar>
            <svg
                class="watermark"
                width="204"
                height="66"
                viewBox="0 0 204 66"
                fill="#fff"
                fill-opacity=".65"
                font-family="Liberation Sans Narrow, Liberation Sans"
                font-size="49"
            >
                <text x="4" y="51" textLength="68" lengthAdjust="spacingAndGlyphs">ANY</text>
                <path
                    d="M77 3l45 25v5L77 59zM84 14v34l28-17z"
                    fill-rule="evenodd"
                    stroke="#fff"
                    stroke-opacity=".8"
                />
                <text x="133" y="51" textLength="66" lengthAdjust="spacingAndGlyphs">RUN</text>
            </svg>
        `;
    }
}
